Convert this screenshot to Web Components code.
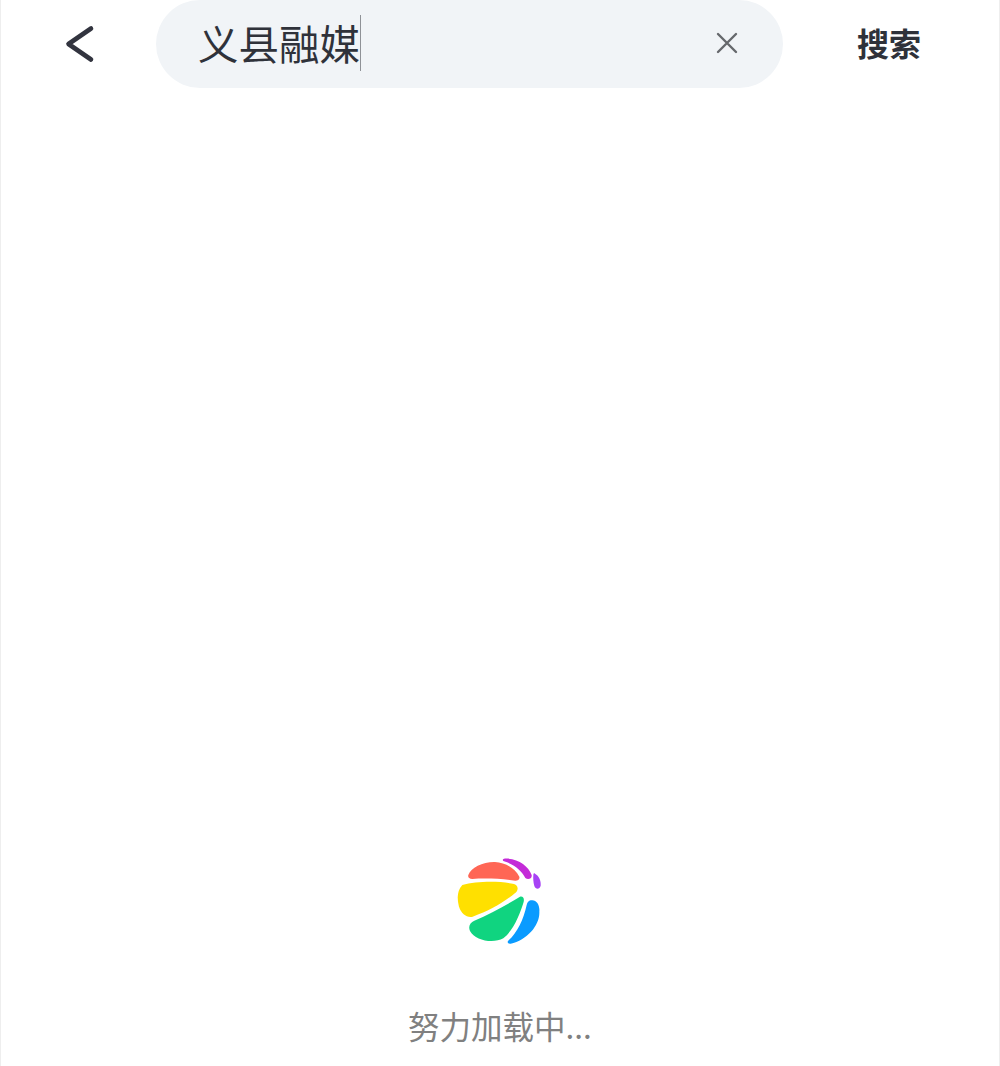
<!DOCTYPE html>
<html lang="zh">
<head>
<meta charset="utf-8">
<title>搜索</title>
<style>
  html, body { margin: 0; height: 100%; background: #fff; }
  body { font-family: "Noto Sans CJK SC", "Noto Sans", sans-serif; overflow: hidden; }
</style>
</head>
<body>
<search-page>
  <search-bar slot="top" value="义县融媒" action="搜索"></search-bar>
  <loading-block slot="bottom">努力加载中...</loading-block>
</search-page>

<script>
class SearchPage extends HTMLElement {
  constructor() {
    super();
    this.attachShadow({ mode: 'open' });
    this.shadowRoot.innerHTML = `
      <style>
        :host {
          display: flex;
          flex-direction: column;
          justify-content: space-between;
          box-sizing: border-box;
          height: 1066px;
          border-left: 1px solid #eeeeee;
          border-right: 1px solid #eeeeee;
        }
      </style>
      <slot name="top"></slot>
      <slot name="bottom"></slot>
    `;
  }
}

class SearchBar extends HTMLElement {
  constructor() {
    super();
    this.attachShadow({ mode: 'open' });
    this.shadowRoot.innerHTML = `
      <style>
        :host {
          display: flex;
          align-items: center;
          height: 88px;
          padding-left: 155px;
          position: relative;
        }
        .back {
          position: absolute;
          left: 60px;
          top: 24px;
          width: 36px;
          height: 40px;
        }
        .pill {
          display: flex;
          align-items: center;
          box-sizing: border-box;
          width: 627px;
          height: 88px;
          padding: 0 44px 0 42px;
          border-radius: 44px;
          background: #f1f4f7;
        }
        .value {
          font-size: 40.5px;
          line-height: 56px;
          color: #2f323a;
          box-shadow: 1px 0 0 #8f9297;
          margin-top: -2px;
          margin-right: auto;
        }
        .clear { width: 24px; height: 24px; display: block; margin-top: -2px; }
        .action {
          margin-left: 74px;
          margin-top: -4px;
          font-size: 32px;
          font-weight: 700;
          line-height: 88px;
          color: #2f323a;
        }
      </style>
      <svg class="back" viewBox="0 0 36 40" fill="none">
        <path d="M30 4.5 L7.5 20 L30 35.5" stroke="#32343f" stroke-width="4.6" stroke-linecap="round" stroke-linejoin="round"/>
      </svg>
      <div class="pill">
        <span class="value"></span>
        <svg class="clear" viewBox="0 0 24 24" fill="none">
          <path d="M3 3 L21 21 M21 3 L3 21" stroke="#66686c" stroke-width="2.4" stroke-linecap="round"/>
        </svg>
      </div>
      <span class="action"></span>
    `;
  }

  connectedCallback() {
    this.shadowRoot.querySelector('.value').textContent = this.getAttribute('value');
    this.shadowRoot.querySelector('.action').textContent = this.getAttribute('action');
  }
}

class LoadingBlock extends HTMLElement {
  constructor() {
    super();
    this.attachShadow({ mode: 'open' });
    this.shadowRoot.innerHTML = `
      <style>
        :host {
          display: flex;
          flex-direction: column;
          align-items: center;
          gap: 46px;
          padding-bottom: 17px;
        }
        svg { width: 120px; height: 110px; display: block; }
        .label {
          font-size: 31.5px;
          line-height: 48px;
          color: #808080;
        }
      </style>
      <svg viewBox="0 0 360 330">
        <path fill="#ff6655" d="M85 90 C92 68 130 50 165 51 C195 52 225 70 238 95 C240 103 234 107 226 107 C185 101 135 99 97 102 C87 102 83 97 85 90Z"/>
        <path fill="#ffe000" d="M67 120 C110 108 180 108 222 117 C234 121 236 133 228 142 C195 170 150 197 98 215 C80 219 64 206 57 185 C50 160 52 135 67 120Z"/>
        <path fill="#10d480" d="M240 155 C251 153 254 162 250 174 C240 205 222 255 190 280 C160 297 105 287 90 258 C84 245 90 232 103 227 C150 207 200 180 240 155Z"/>
        <path fill="#0a9bff" d="M272 166 C288 162 300 178 298 200 C300 240 262 285 212 296 C203 297 200 291 206 286 C232 262 250 225 260 180 C262 172 266 167 272 166Z"/>
        <path fill="#c42bd8" d="M192 41 C232 38 265 62 275 90 C277 101 264 106 256 99 C245 78 225 58 192 49 C187 47 187 42 192 41Z"/>
        <path fill="#a742f5" d="M285 86 C297 92 304 108 302 122 C299 134 287 134 283 123 C280 112 279 100 280 90 C280 85 283 84 285 86Z"/>
      </svg>
      <div class="label"><slot></slot></div>
    `;
  }
}

customElements.define('search-page', SearchPage);
customElements.define('search-bar', SearchBar);
customElements.define('loading-block', LoadingBlock);
</script>
</body>
</html>
